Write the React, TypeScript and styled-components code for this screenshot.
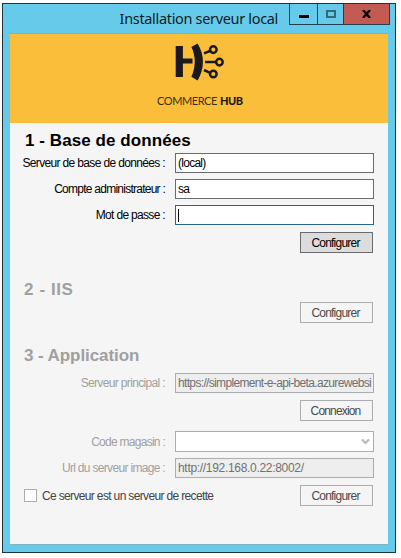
import React from 'react';
import styled, { createGlobalStyle, css } from 'styled-components';

const Global = createGlobalStyle`
  *, *::before, *::after { box-sizing: border-box; }
  body { margin: 0; background: #fff; }
  body, input, button { font-family: "Liberation Sans", Arial, sans-serif; }
`;

const Desktop = styled.main`
  width: 401px;
  height: 558px;
  padding: 3px 0 0 2px;
  background: #fefefe;
`;

const Window = styled.section`
  display: flex;
  flex-direction: column;
  width: 394px;
  height: 550px;
  border: 1px solid #24323c;
  background: #66cbea;
  padding: 0 6px 7px 7px;
`;

const TitleBar = styled.header`
  display: flex;
  justify-content: flex-end;
  height: 29px;
  flex: none;
`;

const WindowTitle = styled.h1`
  margin: 4px 11px 0 0;
  font: 400 14.5px/20px "Noto Sans", "Open Sans", sans-serif;
  letter-spacing: -0.33px;
  white-space: nowrap;
  color: #0d1c22;
`;

const Controls = styled.div`
  display: flex;
  width: 101px;
  height: 21px;
  margin-right: -1px;
  border: 1px solid #25404c;
  border-top: 0;
`;

const Control = styled.button<{ $w: number; $close?: boolean }>`
  display: flex;
  align-items: center;
  justify-content: center;
  width: ${p => p.$w}px;
  padding: 0;
  border: 0;
  border-left: ${p => (p.$w === 27 ? '0' : '1px solid #25404c')};
  background: ${p => (p.$close ? '#c35b52' : 'transparent')};
`;

const Client = styled.div`
  display: flex;
  flex-direction: column;
  flex: 1;
  width: 378px;
  border-top: 1px solid #9da99f;
  border-bottom: 1px solid #86b4c4;
  background: #f5f5f5;
`;

const Banner = styled.div`
  display: flex;
  flex-direction: column;
  height: 89px;
  flex: none;
  background: #fbbe3b;
`;

const Mark = styled.svg`
  display: block;
  width: 54px;
  height: 42px;
  margin: 8px 0 0 163px;
`;

const Brand = styled.div`
  display: flex;
  gap: 3px;
  margin: 9px 0 0 147px;
  font: 400 11px/16px Lato, sans-serif;
  letter-spacing: -0.42px;
  color: #3d3015;
  white-space: nowrap;
`;

const BrandStrong = styled.b`
  font-weight: 900;
  letter-spacing: -0.4px;
  color: #1c1a1b;
`;

const Form = styled.form`
  display: flex;
  flex-direction: column;
  padding: 7px 15px 0 0;
`;

const Group = styled.fieldset<{ $top?: number }>`
  display: flex;
  flex-direction: column;
  min-width: 0;
  margin: ${p => p.$top ?? 0}px 0 0;
  padding: 0;
  border: 0;
`;

const Heading = styled.h2<{ $off?: boolean; $ls?: number }>`
  height: 23px;
  margin: 0 0 0 ${p => (p.$off ? 14 : 15)}px;
  font-size: 17px;
  line-height: 21px;
  font-weight: 700;
  letter-spacing: ${p => p.$ls ?? 0}px;
  white-space: nowrap;
  color: ${p => (p.$off ? '#a0a0a0' : '#000')};
`;

const Row = styled.div<{ $gap?: number; $h?: number }>`
  display: flex;
  align-items: center;
  justify-content: flex-end;
  height: ${p => p.$h ?? 20}px;
  margin-top: ${p => p.$gap ?? 0}px;
`;

const textStyle = css<{ $ls?: number }>`
  font-size: 12px;
  line-height: 14px;
  letter-spacing: ${p => (p.$ls ?? -0.42) - 0.23}px;
  white-space: nowrap;
`;

const Label = styled.label<{ $off?: boolean; $ls?: number }>`
  ${textStyle}
  margin-right: 10px;
  color: ${p => (p.$off ? '#a0a0a0' : '#000')};
`;

type Tone = 'normal' | 'focus' | 'off';
const edge = { normal: '#6b6a6f', focus: '#2a6291', off: '#abadb0' };

const Field = styled.div<{ $tone: Tone; $ls?: number; $white?: boolean; $h?: number }>`
  ${textStyle}
  display: flex;
  align-items: center;
  justify-content: space-between;
  flex: none;
  width: 199px;
  height: ${p => p.$h ?? 20}px;
  padding: 0 1px 0 2px;
  margin-right: -1px;
  overflow: hidden;
  border: 1px solid ${p => edge[p.$tone]};
  background: ${p => (p.$tone === 'off' && !p.$white ? '#eeeeee' : '#fff')};
  color: ${p => (p.$tone === 'off' ? '#707070' : '#000')};
`;

const Caret = styled.i`
  width: 1px;
  height: 13px;
  background: #000;
`;

const Chevron = styled.svg`
  width: 9px;
  height: 7px;
  margin: 0 2px 0 auto;
`;

const Push = styled.button<{ $off?: boolean; $ls?: number }>`
  ${textStyle}
  flex: none;
  width: 73px;
  height: 21px;
  padding: 0 2px 0 0;
  border: 1px solid ${p => (p.$off ? '#abadb0' : '#6b6a6f')};
  background: ${p => (p.$off ? '#f5f5f5' : '#dcdcdc')};
  color: ${p => (p.$off ? '#4a4a4a' : '#000')};
`;

const CheckLabel = styled.label`
  ${textStyle}
  display: flex;
  align-items: center;
  gap: 5px;
  margin: 0 auto 0 14px;
  color: #444;
`;

const Box = styled.span`
  width: 13px;
  height: 13px;
  border: 1px solid #abadb0;
  background: #fff;
`;

const HubMark = () => (
  <Mark viewBox="0 0 54 42" fill="none" stroke="#1c191c">
    <path d="M2.7 4h7.2v12.5h9.6v5H9.9V35H2.7Z" fill="#1c191c" stroke="none" />
    <path d="M18.4 5 24.6 1.6C31.8 13 31.8 27 24.6 38.4L18.4 34.8C22.9 24.5 22.9 14.5 18.4 5Z" fill="#1c191c" stroke="none" />
    <g strokeWidth="2.5">
      <path d="M31 11.3 37 9" />
      <circle cx="40.3" cy="7.6" r="3.3" />
      <path d="M32 20H43" />
      <circle cx="46.4" cy="20.1" r="3.3" />
      <path d="M31 28 37 30.8" />
      <circle cx="40.3" cy="32" r="3.3" />
    </g>
  </Mark>
);

export default function App() {
  return (
    <Desktop>
      <Global />
      <Window>
        <TitleBar>
          <WindowTitle>Installation serveur local</WindowTitle>
          <Controls>
            <Control $w={27} aria-label="Réduire">
              <svg width="10" height="10"><path d="M0 6h10v3H0z" fill="#000" /></svg>
            </Control>
            <Control $w={26} aria-label="Agrandir">
              <svg width="10" height="8"><path d="M1 1h8v6H1z" fill="none" stroke="#356879" strokeWidth="2" /></svg>
            </Control>
            <Control $w={46} $close aria-label="Fermer">
              <svg width="9" height="8"><path d="M1 0 8 8M8 0 1 8" stroke="#000" strokeWidth="2.4" /></svg>
            </Control>
          </Controls>
        </TitleBar>
        <Client>
          <Banner>
            <HubMark />
            <Brand>COMMERCE <BrandStrong>HUB</BrandStrong></Brand>
          </Banner>
          <Form>
            <Group>
              <Heading $ls={0.07}>1 - Base de données</Heading>
              <Row>
                <Label>Serveur de base de données :</Label>
                <Field $tone="normal" $ls={-0.5}>(local)</Field>
              </Row>
              <Row $gap={6}>
                <Label $ls={-0.52}>Compte administrateur :</Label>
                <Field $tone="normal">sa</Field>
              </Row>
              <Row $gap={6}>
                <Label $ls={-0.45}>Mot de passe :</Label>
                <Field $tone="focus"><Caret /></Field>
              </Row>
              <Row $gap={7} $h={21}><Push type="button" $ls={-0.55}>Configurer</Push></Row>
            </Group>
            <Group $top={26}>
              <Heading $off $ls={0.6}>2 - IIS</Heading>
              <Row $h={21}><Push type="button" $off $ls={-0.55}>Configurer</Push></Row>
            </Group>
            <Group $top={22}>
              <Heading $off $ls={-0.08}>3 - Application</Heading>
              <Row $gap={5}>
                <Label $off>Serveur principal :</Label>
                <Field $tone="off" $ls={-0.43}>https://simplement-e-api-beta.azurewebsi</Field>
              </Row>
              <Row $gap={7} $h={21}><Push type="button" $off $ls={-0.6}>Connexion</Push></Row>
              <Row $gap={10} $h={21}>
                <Label $off $ls={-0.5}>Code magasin :</Label>
                <Field $tone="off" $white $h={21}>
                  <Chevron viewBox="0 0 9 7"><path d="M1 1.5 4.5 5 8 1.5" fill="none" stroke="#b8b8b8" strokeWidth="2.2" /></Chevron>
                </Field>
              </Row>
              <Row $gap={6}>
                <Label $off $ls={-0.45}>Url du serveur image :</Label>
                <Field $tone="off" $ls={-0.08}>http://192.168.0.22:8002/</Field>
              </Row>
              <Row $gap={7} $h={21}>
                <CheckLabel><Box />Ce serveur est un serveur de recette</CheckLabel>
                <Push type="button" $off $ls={-0.55}>Configurer</Push>
              </Row>
            </Group>
          </Form>
        </Client>
      </Window>
    </Desktop>
  );
}
